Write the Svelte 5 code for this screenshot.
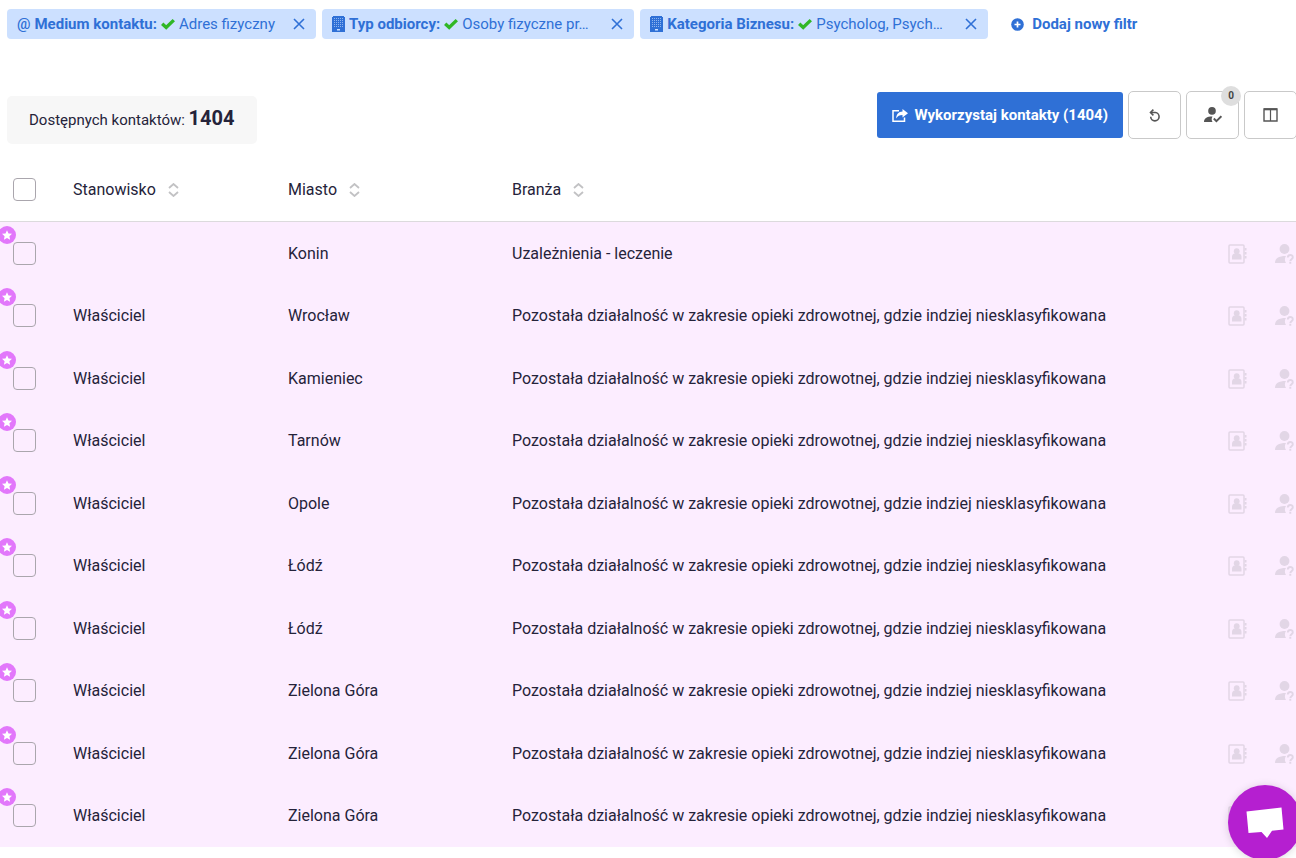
<script>
  const filters = [
    { icon: 'at', label: 'Medium kontaktu:', value: 'Adres fizyczny' },
    { icon: 'building', label: 'Typ odbiorcy:', value: 'Osoby fizyczne pr…' },
    { icon: 'building', label: 'Kategoria Biznesu:', value: 'Psycholog, Psych…' },
  ];
  const columns = ['Stanowisko', 'Miasto', 'Branża'];
  const health = 'Pozostała działalność w zakresie opieki zdrowotnej, gdzie indziej niesklasyfikowana';
  const contacts = [
    { role: '', city: 'Konin', branch: 'Uzależnienia - leczenie' },
    ...['Wrocław', 'Kamieniec', 'Tarnów', 'Opole', 'Łódź', 'Łódź', 'Zielona Góra', 'Zielona Góra', 'Zielona Góra'].map(
      (city) => ({ role: 'Właściciel', city, branch: health })
    ),
  ];
</script>

<div class="page">
  <div class="filters">
    {#each filters as filter}
      <div class="chip">
        <span class="chip-text">
          {#if filter.icon === 'at'}
            <span class="at">@</span>
          {:else}
            <svg width="13" height="16" viewBox="0 0 13 16" aria-hidden="true">
              <path d="M1 0h11v1h1v15H0V1h1z" fill="#2f70d6" />
              <path d="M2 2.500h9M2 4.500h9M2 6.500h9M2 8.500h9M2 10.500h9" stroke="#8fb4ee" stroke-width="1" stroke-dasharray="1 1" />
              <path d="M5 13h3v1.500H5z" fill="#cce0ff" />
            </svg>
          {/if}
          <b>{filter.label}</b>
          <svg width="14" height="12" viewBox="0 0 14 12" aria-hidden="true">
            <path d="M1.200 5.800l4 3.700 7.600-7.400" fill="none" stroke="#30b726" stroke-width="3.400" />
          </svg>
          <span class:long={filter.icon === 'building'}>{filter.value}</span>
        </span>
        <button class="remove" aria-label="Usuń filtr">
          <svg width="12" height="12" viewBox="0 0 12 12"><path d="M1 1l10 10M11 1L1 11" stroke="#2f70d6" stroke-width="1.600" /></svg>
        </button>
      </div>
    {/each}
    <button class="add">
      <svg width="13" height="13" viewBox="0 0 13 13" aria-hidden="true">
        <circle cx="6.500" cy="6.500" r="6.300" fill="#2f70d6" />
        <path d="M6.500 3.500v6M3.500 6.500h6" stroke="#fff" stroke-width="1.700" />
      </svg>
      Dodaj nowy filtr
    </button>
  </div>

  <div class="toolbar">
    <div class="count">Dostępnych kontaktów: <strong>1404</strong></div>
    <div class="actions">
      <button class="primary">
        <svg width="16" height="13" viewBox="0 0 16 13" aria-hidden="true">
          <path d="M7 1.700H1v10.500h11.500V8.500" fill="none" stroke="#fff" stroke-width="1.500" />
          <path d="M10.500 0L16 4.200l-5.500 4.300V6C7.500 6 5.500 7 4.200 9.500 4.300 5.500 6.500 2.700 10.500 2.500z" fill="#fff" />
        </svg>
        Wykorzystaj kontakty (1404)
      </button>
      <button class="tool" aria-label="Odśwież">
        <svg width="12" height="13" viewBox="0 0 12 13">
          <path d="M2 3.500h4.300a4.200 4.200 0 1 1-4.600 4.300" fill="none" stroke="#555" stroke-width="1.600" />
          <path d="M4.400.6L1.500 3.500l2.900 2.900" fill="none" stroke="#555" stroke-width="1.600" />
        </svg>
      </button>
      <button class="tool" aria-label="Wybrane kontakty">
        <svg width="18" height="16" viewBox="0 0 18 16">
          <circle cx="8" cy="3.900" r="3.800" fill="#555" />
          <path d="M0 15c0-3.500 2.500-5.500 8.500-5.500-1.200 1.800-1 3.800 0 5.500z" fill="#555" />
          <path d="M9.800 11.500l2.600 2.700 5-5" fill="none" stroke="#555" stroke-width="1.900" />
        </svg>
        <span class="badge">0</span>
      </button>
      <button class="tool" aria-label="Kolumny">
        <svg width="15" height="14" viewBox="0 0 15 14">
          <path d="M1 1h13v12H1z" fill="none" stroke="#555" stroke-width="1.400" />
          <path d="M1 1.300h13" stroke="#555" stroke-width="2" />
          <path d="M7.500 1v12" stroke="#555" stroke-width="1.200" />
        </svg>
      </button>
    </div>
  </div>

  <table>
    <colgroup>
      <col class="c-check" /><col class="c-role" /><col class="c-city" /><col /><col class="c-icons" />
    </colgroup>
    <thead>
      <tr>
        <th class="check"><input type="checkbox" aria-label="Zaznacz wszystkie" /></th>
        {#each columns as column}
          <th>
            <button class="sort">
              {column}
              <svg width="11" height="14" viewBox="0 0 11 14" aria-hidden="true">
                <path d="M1 5l4.500-4L10 5M1 9l4.500 4L10 9" fill="none" stroke="#c2c2c4" stroke-width="1.800" />
              </svg>
            </button>
          </th>
        {/each}
        <th></th>
      </tr>
    </thead>
    <tbody>
      {#each contacts as contact}
        <tr>
          <td class="check">
            <svg class="star" width="18" height="18" viewBox="0 0 18 18" aria-hidden="true">
              <circle cx="9" cy="9" r="9" fill="#e277fb" />
              <path d="M9 4.200l1.500 3.200 3.500.4-2.600 2.400.7 3.500L9 12l-3.100 1.700.7-3.500L4 7.800l3.500-.4z" fill="#fff" />
            </svg>
            <input type="checkbox" aria-label="Zaznacz kontakt" />
          </td>
          <td class="text">{contact.role}</td>
          <td class="text">{contact.city}</td>
          <td class="text">{contact.branch}</td>
          <td class="text">
            <div class="icon-row">
              <svg width="19" height="20" viewBox="0 0 19 20" aria-hidden="true">
                <rect x="1" y="1" width="15" height="18" rx="1" fill="none" stroke="#e2d6e6" stroke-width="1.500" />
                <path d="M17.500 4v2.500M17.500 8v2.500M17.500 12v2.500" stroke="#e2d6e6" stroke-width="2" />
                <circle cx="8.700" cy="7.200" r="2.900" fill="#e2d6e6" />
                <path d="M4 15.500v-2.500c0-2 1.200-3.500 2.500-3.500h4.500c1.300 0 2.500 1.500 2.500 3.500v2.500z" fill="#e2d6e6" />
              </svg>
              <svg width="19" height="20" viewBox="0 0 19 20" aria-hidden="true">
                <circle cx="9.500" cy="5" r="4.900" fill="#e2d6e6" />
                <path d="M0 19c0-4.500 3.500-7 11-7-1.500 2-1.500 5 0 7z" fill="#e2d6e6" />
                <path d="M12.800 13.500c0-3.300 5-3.200 5-.3 0 2-2.500 2-2.500 4M15.300 18v1.800" fill="none" stroke="#e2d6e6" stroke-width="1.900" />
              </svg>
            </div>
          </td>
        </tr>
      {/each}
    </tbody>
  </table>

  <button class="chat" aria-label="Czat">
    <svg width="38" height="32" viewBox="0 0 38 32"><path d="M.5 4.500L35.500.5 37.500 22.500 26 23.800 21 31 15.500 25 2.500 26z" fill="#fff" /></svg>
  </button>
</div>

<style>
  :global(body) {
    margin: 0;
    background: #fff;
    overflow-x: hidden;
  }
  .page {
    font: 16px/24px Roboto, sans-serif;
    color: #25233a;
  }
  button {
    font: inherit;
    color: inherit;
    border: 0;
    padding: 0;
    background: none;
    cursor: pointer;
  }
  svg {
    flex: none;
    display: block;
  }
  .filters {
    display: flex;
    gap: 6px;
    padding: 9px 7px 0;
    font-size: 15px;
  }
  .chip {
    display: flex;
    align-items: center;
    gap: 18px;
    height: 30px;
    box-sizing: border-box;
    padding: 0 11px 0 10px;
    border-radius: 4px;
    background: #cce0ff;
    color: #2f70d6;
    white-space: nowrap;
  }
  .chip-text {
    display: flex;
    align-items: center;
    gap: 4px;
  }
  .at {
    font-weight: 500;
  }
  .long {
    min-width: 131px;
  }
  .remove {
    display: flex;
  }
  .add {
    display: flex;
    align-items: center;
    gap: 8px;
    margin-left: 17px;
    color: #2f70d6;
    font-weight: 700;
  }
  .toolbar {
    display: flex;
    justify-content: space-between;
    align-items: center;
    margin-right: -1px;
    padding: 47px 0 0 7px;
    font-size: 15px;
  }
  .count {
    height: 48px;
    box-sizing: border-box;
    margin-top: 10px;
    padding: 10px 22px;
    border-radius: 5px;
    background: #f7f7f7;
  }
  .count strong {
    font-size: 20px;
  }
  .actions {
    display: flex;
    align-items: center;
    gap: 5px;
  }
  .primary {
    display: flex;
    align-items: center;
    gap: 6px;
    height: 46px;
    padding: 0 15px;
    border-radius: 3px;
    background: #2f70d6;
    color: #fff;
    font-weight: 700;
  }
  .tool {
    position: relative;
    display: flex;
    align-items: center;
    justify-content: center;
    width: 53px;
    height: 48px;
    border: 1px solid #c9c9c9;
    border-radius: 5px;
    background: #fff;
  }
  .badge {
    position: absolute;
    top: -6px;
    right: -3px;
    width: 20px;
    height: 20px;
    border-radius: 50%;
    background: #dedede;
    font: 700 10px/20px Roboto, sans-serif;
    color: #444;
  }
  table {
    width: 100%;
    margin-top: 14px;
    table-layout: fixed;
    border-collapse: separate;
    border-spacing: 0;
  }
  .c-check {
    width: 57px;
  }
  .c-role {
    width: 215px;
  }
  .c-city {
    width: 224px;
  }
  .c-icons {
    width: 84px;
  }
  th,
  td {
    padding: 0 0 0 16px;
    text-align: left;
    font-weight: 400;
    white-space: nowrap;
  }
  th {
    height: 63px;
    border-bottom: 1px solid #dcdadd;
  }
  td {
    box-sizing: border-box;
    height: 62px;
    background: #fcedff;
  }
  tbody tr:nth-child(even) td {
    height: 63px;
  }
  .text {
    padding-top: 1px;
  }
  .check {
    position: relative;
    padding-left: 13px;
  }
  input {
    appearance: none;
    display: block;
    width: 23px;
    height: 23px;
    margin: 0;
    box-sizing: border-box;
    border: 1px solid #aaa6ad;
    border-radius: 4px;
  }
  .star {
    position: absolute;
    top: 4px;
    left: -2px;
  }
  .sort {
    display: flex;
    align-items: center;
    gap: 12px;
  }
  .icon-row {
    display: flex;
    gap: 28px;
  }
  .chat {
    position: fixed;
    right: -6px;
    bottom: -2px;
    display: flex;
    align-items: center;
    justify-content: center;
    width: 74px;
    height: 75px;
    border-radius: 50%;
    background: #b51fd0;
    box-shadow: 0 1px 8px rgba(0, 0, 0, 0.15);
  }
</style>
